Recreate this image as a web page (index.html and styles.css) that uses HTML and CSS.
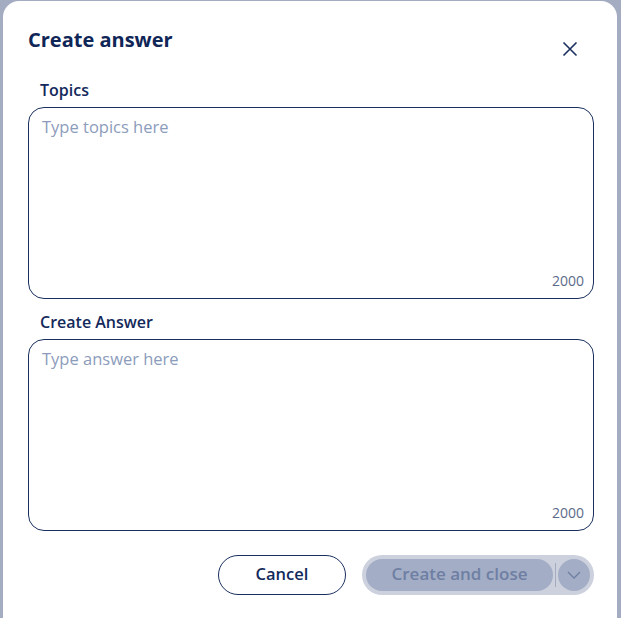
FILE: index.html
```html
<!DOCTYPE html>
<html>
<head>
<meta charset="utf-8">
<link rel="stylesheet" href="styles.css">
</head>
<body>
<div class="dialog">
  <div class="header">
    <h1 class="title">Create answer</h1>
    <button class="close" aria-label="Close">
      <svg width="16" height="16" viewBox="0 0 16 16"><path d="M1.5 1.5 L14.5 14.5 M14.5 1.5 L1.5 14.5" stroke="#1a2f5e" stroke-width="1.6" fill="none"/></svg>
    </button>
  </div>
  <div class="field">
    <div class="label">Topics</div>
    <div class="box">
      <span class="placeholder">Type topics here</span>
      <span class="counter">2000</span>
    </div>
  </div>
  <div class="field second">
    <div class="label">Create Answer</div>
    <div class="box">
      <span class="placeholder">Type answer here</span>
      <span class="counter">2000</span>
    </div>
  </div>
  <div class="actions">
    <button class="cancel">Cancel</button>
    <div class="split">
      <button class="primary">Create and close</button>
      <span class="divider"></span>
      <button class="chev" aria-label="More">
        <svg width="14" height="8" viewBox="0 0 14 8"><path d="M1 1 L7 7 L13 1" stroke="#6e7fa3" stroke-width="1.3" fill="none"/></svg>
      </button>
    </div>
  </div>
</div>
</body>
</html>
```
FILE: styles.css
```css
html, body {
  margin: 0;
  padding: 0;
  background: #a4acc1;
  height: 618px;
  overflow: hidden;
}
body {
  font-family: "Open Sans", "Liberation Sans", sans-serif;
  color: #13295b;
}
.dialog {
  margin: 1px 0 0 3px;
  width: 614px;
  height: 640px;
  box-sizing: border-box;
  background: #fff;
  border-radius: 16px;
  padding: 26px 23px 0 25px;
}
.header {
  display: flex;
  justify-content: space-between;
  align-items: flex-start;
  height: 26px;
}
.title {
  margin: 0;
  font-size: 20px;
  line-height: 26px;
  font-weight: 700;
  color: #0f2657;
}
.close {
  margin: 14px 16px 0 0;
  padding: 0;
  border: 0;
  background: none;
  width: 16px;
  height: 16px;
  display: flex;
}
.field {
  display: flex;
  flex-direction: column;
  margin-top: 27px;
}
.field.second {
  margin-top: 13px;
}
.label {
  font-size: 16px;
  line-height: 20px;
  font-weight: 600;
  padding-left: 12px;
  margin-bottom: 7px;
  color: #13295b;
}
.box {
  height: 192px;
  box-sizing: border-box;
  border: 1px solid #1a2f5e;
  border-radius: 16px;
  display: flex;
  flex-direction: column;
  padding: 8px 9px 9px 13px;
}
.placeholder {
  font-size: 16.5px;
  line-height: 22px;
  color: #8c9cbb;
}
.counter {
  margin-top: auto;
  align-self: flex-end;
  font-size: 14px;
  line-height: 16px;
  color: #5b6b89;
}
.actions {
  display: flex;
  justify-content: flex-end;
  align-items: center;
  gap: 16px;
  margin-top: 24px;
}
button {
  font-family: inherit;
  cursor: pointer;
}
.cancel {
  width: 128px;
  height: 40px;
  border: 1px solid #1a2f5e;
  border-radius: 20px;
  background: #fff;
  color: #13295b;
  font-size: 16.5px;
  font-weight: 600;
  padding: 0 0 3px;
}
.split {
  width: 232px;
  height: 40px;
  box-sizing: border-box;
  padding: 4px;
  background: #ccd1dd;
  border-radius: 20px;
  display: flex;
  align-items: center;
}
.primary {
  width: 187px;
  height: 32px;
  border: 0;
  border-radius: 16px;
  background: #a3adc5;
  color: #6e7fa3;
  font-size: 17px;
  font-weight: 600;
  padding: 0 0 3px;
}
.divider {
  width: 1px;
  height: 24px;
  background: #a3abbf;
  margin: 0 2px 0 2px;
}
.chev {
  width: 32px;
  height: 32px;
  border: 0;
  border-radius: 50%;
  background: #a3adc5;
  display: flex;
  align-items: center;
  justify-content: center;
  padding: 0;
}
```
